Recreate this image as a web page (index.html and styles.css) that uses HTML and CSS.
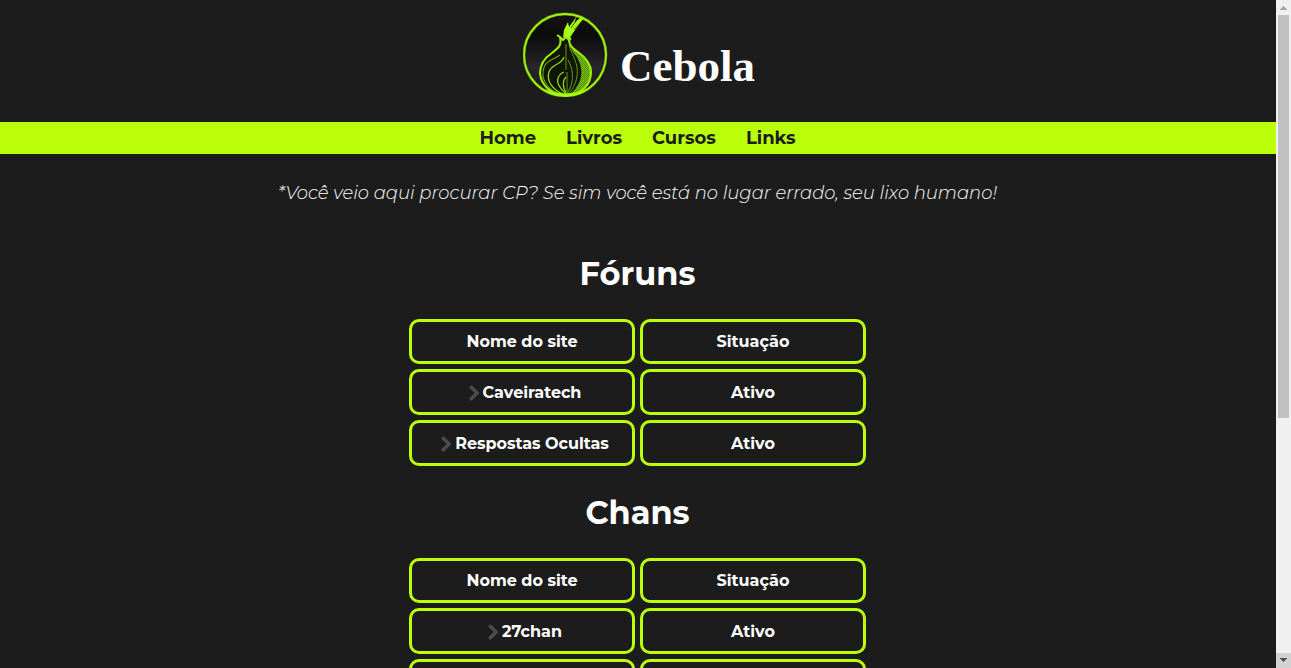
FILE: index.html
```
<!DOCTYPE html>
<html lang="pt-BR">
<head>
<meta charset="utf-8">
<title>Cebola</title>
<link rel="stylesheet" href="styles.css">
</head>
<body>
<svg class="defs" aria-hidden="true">
  <symbol id="chevron" viewBox="0 0 11 16"><path d="M2.3 2.3 8.2 8 2.3 13.7" fill="none" stroke="#4c4c4c" stroke-width="3.6" stroke-linecap="round" stroke-linejoin="round"/></symbol>
</svg>
<div class="page">
  <header class="header">
    <svg class="logo" viewBox="0 0 85 85" role="img" aria-label="Cebola">
      <defs>
        <linearGradient id="disc" x1="0" y1="0" x2="0" y2="1">
          <stop offset="0" stop-color="#151515"/><stop offset=".25" stop-color="#0b0b0b"/><stop offset=".65" stop-color="#29252c"/><stop offset="1" stop-color="#151515"/>
        </linearGradient>
        <pattern id="mesh" width="2" height="2" patternUnits="userSpaceOnUse">
          <rect width="2" height="2" fill="#4c8a08"/><rect width="1" height="1" fill="#83cf10"/><rect x="1" y="1" width="1" height="1" fill="#75bd0e"/>
        </pattern>
      </defs>
      <circle cx="42" cy="43" r="41" fill="url(#disc)" stroke="#4a7610" stroke-width="3"/>
      <circle cx="42" cy="43" r="41" fill="none" stroke="#a4f20b" stroke-width="1.8"/>
      <path d="M40 26 41 18 45 10 46 15 54 4 51 11 58 5 60 7 50 21 46 27Z" fill="#a9ff0b"/>
      <path d="M48 16 53 9M51 18 59 9" fill="none" stroke="#193006" stroke-width=".8"/>
      <path d="M37 25C39 34 35 36 29 41C20 47 17 54 17 61C18 74 29 83 43 83C57 83 68 74 68 60C68 52 62 45 55 40C49 36 46 34 46 26" fill="#101507"/>
      <path d="M47 37C55 44 60 55 58 65C56 74 50 81 44 83C57 83 68 74 68 60C68 52 62 45 55 40Z" fill="url(#mesh)"/>
      <path d="M37 25C39 34 35 36 29 41C20 47 17 54 17 61C18 74 29 83 43 83C57 83 68 74 68 60C68 52 62 45 55 40C49 36 46 34 46 26M37 25 34 23M37 25 40 28 43 25 46 28 48 26" fill="none" stroke="#9eee0b" stroke-width="2.1" stroke-linejoin="round"/>
      <path d="M37 43C28 49 21 49 20 60C19 69 26 79 38 82" fill="none" stroke="#6ba70e" stroke-width="1.1"/>
      <path d="M41 45C39 53 28 52 26 60C23 69 30 78 40 82M41 60C34 63 33 70 37 75C39 79 42 80 43 82M43 65C39 69 40 77 43 80" fill="none" stroke="#8edc0c" stroke-width="1.3"/>
      <path d="M45 48C50 56 51 68 47 76L44 82M46 33C49 44 56 51 54 64C53 73 48 79 45 82M43 32V58M44 60V82" fill="none" stroke="#64990d" stroke-width="1"/>
      <path d="M22 77Q43 86 64 77Q56 84 43 84.500Q30 84 22 77Z" fill="#a9ff0b"/>
    </svg>
    <h1 class="brand">Cebola</h1>
  </header>
  <nav class="nav">
    <a href="#home">Home</a>
    <a href="#livros">Livros</a>
    <a href="#cursos">Cursos</a>
    <a href="#links">Links</a>
  </nav>
  <main class="content">
    <p class="notice">*Você veio aqui procurar CP? Se sim você está no lugar errado, seu lixo humano!</p>
    <section class="group">
      <h2>Fóruns</h2>
      <table class="sites">
        <thead><tr><th>Nome do site</th><th>Situação</th></tr></thead>
        <tbody>
          <tr><td><a href="#caveiratech"><svg class="chevron"><use href="#chevron"/></svg>Caveiratech</a></td><td>Ativo</td></tr>
          <tr><td><a href="#respostas"><svg class="chevron"><use href="#chevron"/></svg>Respostas Ocultas</a></td><td>Ativo</td></tr>
        </tbody>
      </table>
    </section>
    <section class="group">
      <h2>Chans</h2>
      <table class="sites">
        <thead><tr><th>Nome do site</th><th>Situação</th></tr></thead>
        <tbody>
          <tr><td><a href="#27chan"><svg class="chevron"><use href="#chevron"/></svg>27chan</a></td><td>Ativo</td></tr>
          <tr><td></td><td></td></tr>
        </tbody>
      </table>
    </section>
  </main>
</div>
<div class="scrollbar" aria-hidden="true">
  <svg class="arrow" viewBox="0 0 15 15" shape-rendering="crispEdges"><path d="M4 10h7v-1h-1v-1h-1v-1h-1v-1h-1v1h-1v1h-1v1h-1z" fill="#a3a3a3"/></svg>
  <div class="track"><div class="thumb"></div></div>
  <svg class="arrow arrow-down" viewBox="0 0 15 15" shape-rendering="crispEdges"><path d="M4 5h7v1h-1v1h-1v1h-1v1h-1v-1h-1v-1h-1v-1h-1z" fill="#505050"/></svg>
</div>
</body>
</html>
```
FILE: styles.css
```
* { box-sizing: border-box; }
body {
  display: flex;
  height: 100vh;
  margin: 0;
  overflow: hidden;
  background: #1c1c1c;
  color: #fff;
  font-family: Montserrat, "Open Sans", sans-serif;
}
a { color: inherit; text-decoration: none; }
.defs { position: absolute; width: 0; height: 0; }
.page { flex: 1; overflow: hidden; }
.header {
  display: flex;
  justify-content: center;
  gap: 12px;
  padding: 12px 0 25px 2px;
}
.logo { width: 85px; height: 85px; }
.brand {
  margin: 28px 0 0;
  font: bold 45px/52px "Liberation Serif", serif;
}
.nav {
  display: flex;
  justify-content: center;
  gap: 30px;
  padding-right: 1px;
  background: #bbff0a;
  color: #1c1c1c;
  font-size: 18px;
  font-weight: 700;
  line-height: 32px;
}
.content { padding-right: 1px; }
.notice {
  margin: 27px 0 47px;
  font-size: 18px;
  font-style: italic;
  font-weight: 300;
  line-height: 24px;
  text-align: center;
}
.group { margin-bottom: 20px; }
.group h2 {
  margin: 0 0 18px;
  font-size: 32px;
  font-weight: 700;
  line-height: 44px;
  text-align: center;
}
.sites {
  margin: 0 auto;
  border-spacing: 5px;
  font-size: 16px;
  line-height: 20px;
  text-align: center;
}
.sites th, .sites td {
  width: 226px;
  height: 46px;
  padding: 0;
  border: 3px solid #bbff0a;
  border-radius: 10px;
  font-weight: 700;
}
.sites th { height: 45px; }
.sites td { padding-top: 2px; }
.sites a {
  display: flex;
  align-items: center;
  justify-content: center;
  gap: 3px;
  padding-left: 6px;
}
.chevron { width: 11px; height: 16px; }
.scrollbar {
  display: flex;
  flex-direction: column;
  width: 15px;
  background: #f0f0f0;
}
.arrow { width: 15px; height: 15px; }
.arrow-down { background: #d2d2d2; }
.track { flex: 1; padding: 0 2px; }
.thumb { height: 63.2%; background: #c1c1c1; }
```
